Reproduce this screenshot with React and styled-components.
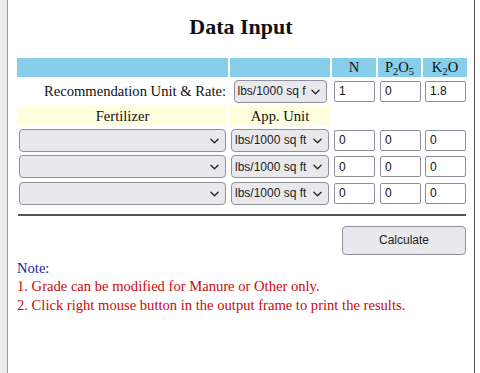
import React from 'react'
import styled, { createGlobalStyle } from 'styled-components'

const GlobalStyle = createGlobalStyle`
    html, body {
        margin: 0;
        padding: 0;
        background: #fff;
    }
    body {
        font-family: "Liberation Serif", "Times New Roman", serif;
    }
`

const fertRows = [0, 1, 2]

function Chevron() {
    return (
        <ChevronIcon viewBox='0 0 10 6' width='9' height='6'>
            <path d='M1 1l4 4 4-4' fill='none' stroke='#222' strokeWidth='1.4' strokeLinecap='round' strokeLinejoin='round' />
        </ChevronIcon>
    )
}

function Select({ width, value }) {
    return (
        <SelectWrap $width={width}>
            <SelectBox defaultValue={value}>
                <option>{value}</option>
            </SelectBox>
            <Chevron />
        </SelectWrap>
    )
}

function App() {
    return (
        <>
            <GlobalStyle />
            <Frame>
                <Page>
                    <Title>Data Input</Title>
                    <Table>
                        <colgroup>
                            <col style={{ width: 211 }} />
                            <col style={{ width: 100 }} />
                            <col style={{ width: 44 }} />
                            <col style={{ width: 43 }} />
                            <col style={{ width: 44 }} />
                        </colgroup>
                        <tbody>
                            <tr>
                                <HeadCell />
                                <HeadCell />
                                <HeadCell>N</HeadCell>
                                <HeadCell>P<sub>2</sub>O<sub>5</sub></HeadCell>
                                <HeadCell>K<sub>2</sub>O</HeadCell>
                            </tr>
                            <tr>
                                <LabelCell>Recommendation Unit &amp; Rate:</LabelCell>
                                <Cell><Select width={93} value='lbs/1000 sq ft' /></Cell>
                                <Cell><NumInput defaultValue='1' /></Cell>
                                <Cell><NumInput defaultValue='0' /></Cell>
                                <Cell><NumInput defaultValue='1.8' /></Cell>
                            </tr>
                            <tr>
                                <SubHead>Fertilizer</SubHead>
                                <SubHead>App. Unit</SubHead>
                                <EmptyCell />
                                <EmptyCell />
                                <EmptyCell />
                            </tr>
                            {fertRows.map(i => (
                                <FertRow key={i}>
                                    <Cell><Select width={207} value='' /></Cell>
                                    <Cell><Select width={98} value='lbs/1000 sq ft' /></Cell>
                                    <Cell><NumInput defaultValue='0' /></Cell>
                                    <Cell><NumInput defaultValue='0' /></Cell>
                                    <Cell><NumInput defaultValue='0' /></Cell>
                                </FertRow>
                            ))}
                        </tbody>
                    </Table>
                    <Rule />
                    <ButtonRow>
                        <CalcButton>Calculate</CalcButton>
                    </ButtonRow>
                    <Notes>
                        <NoteTitle>Note:</NoteTitle>
                        <NoteLine>1. Grade can be modified for Manure or Other only.</NoteLine>
                        <NoteLine>2. Click right mouse button in the output frame to print the results.</NoteLine>
                    </Notes>
                </Page>
            </Frame>
        </>
    )
}

export default App

const Frame = styled.div`
    width: 480px;
    height: 373px;
    background: #fff;
    display: flex;
    overflow: hidden;
    &::before {
        content: '';
        width: 7px;
        flex: none;
        background: #ececec;
    }
`
const Page = styled.div`
    width: 468px;
    flex: none;
    border-left: 1px solid #9a9a9a;
    border-right: 1px solid #555;
    background: #fff;
    padding: 0 0 0 8px;
    box-sizing: border-box;
    display: flex;
    flex-direction: column;
`
const Title = styled.h1`
    margin: 14px 0 0;
    font-size: 22px;
    font-weight: bold;
    text-align: center;
    line-height: 26px;
    color: #111;
    padding-right: 8px;
`
const Table = styled.table`
    margin-top: 16px;
    width: 454px;
    table-layout: fixed;
    border-collapse: separate;
    border-spacing: 2px 2px;
    margin-left: -1px;
    font-size: 14.6px;
    line-height: 17px;
    color: #111;
    sub {
        font-size: 10.5px;
        line-height: 0;
        vertical-align: -3px;
    }
`
const FertRow = styled.tr`
    & > td {
        height: 24.5px;
    }
`
const Cell = styled.td`
    padding: 0;
    height: 24px;
    vertical-align: middle;
`
const EmptyCell = styled.td`
    padding: 0;
`
const HeadCell = styled.td`
    background: #87ceeb;
    height: 19px;
    padding: 0;
    text-align: center;
`
const LabelCell = styled.td`
    padding: 0 2px 0 0;
    height: 24px;
    text-align: right;
    white-space: nowrap;
`
const SubHead = styled.td`
    background: #ffffe0;
    height: 20px;
    padding: 1px 0 0;
    text-align: center;
`
const SelectWrap = styled.div`
    position: relative;
    width: ${p => p.$width}px;
    margin: 0 auto;
`
const SelectBox = styled.select`
    appearance: none;
    width: 100%;
    height: 23px;
    box-sizing: border-box;
    border: 1px solid #8f8f9d;
    border-radius: 4px;
    background: #e9e9ed;
    font-family: "Liberation Sans", Arial, sans-serif;
    font-size: 12px;
    color: #222;
    padding: 0 20px 0 3px;
    display: block;
`
const ChevronIcon = styled.svg`
    position: absolute;
    right: 7px;
    top: 9px;
    pointer-events: none;
`
const NumInput = styled.input`
    width: 41px;
    height: 21px;
    box-sizing: border-box;
    border: 1px solid #8f8f9d;
    border-radius: 2px;
    margin-left: 2px;
    padding: 0 4px;
    font-family: "Liberation Sans", Arial, sans-serif;
    font-size: 12px;
    color: #111;
    display: block;
    background: #fff;
`
const Rule = styled.hr`
    width: 448px;
    margin: 6px 0 0 2px;
    border: none;
    border-top: 2px solid #555;
    height: 0;
`
const ButtonRow = styled.div`
    display: flex;
    justify-content: flex-end;
    width: 450px;
    margin-top: 10px;
`
const CalcButton = styled.button`
    width: 124px;
    height: 29px;
    border: 1px solid #8f8f9d;
    border-radius: 4px;
    background: #e9e9ed;
    font-family: "Liberation Sans", Arial, sans-serif;
    font-size: 12px;
    color: #222;
`
const Notes = styled.div`
    margin-top: 4px;
    padding-left: 1px;
    font-size: 14.6px;
    line-height: 18.5px;
`
const NoteTitle = styled.div`
    color: #1a1a9c;
`
const NoteLine = styled.div`
    color: #cc0a0a;
`
